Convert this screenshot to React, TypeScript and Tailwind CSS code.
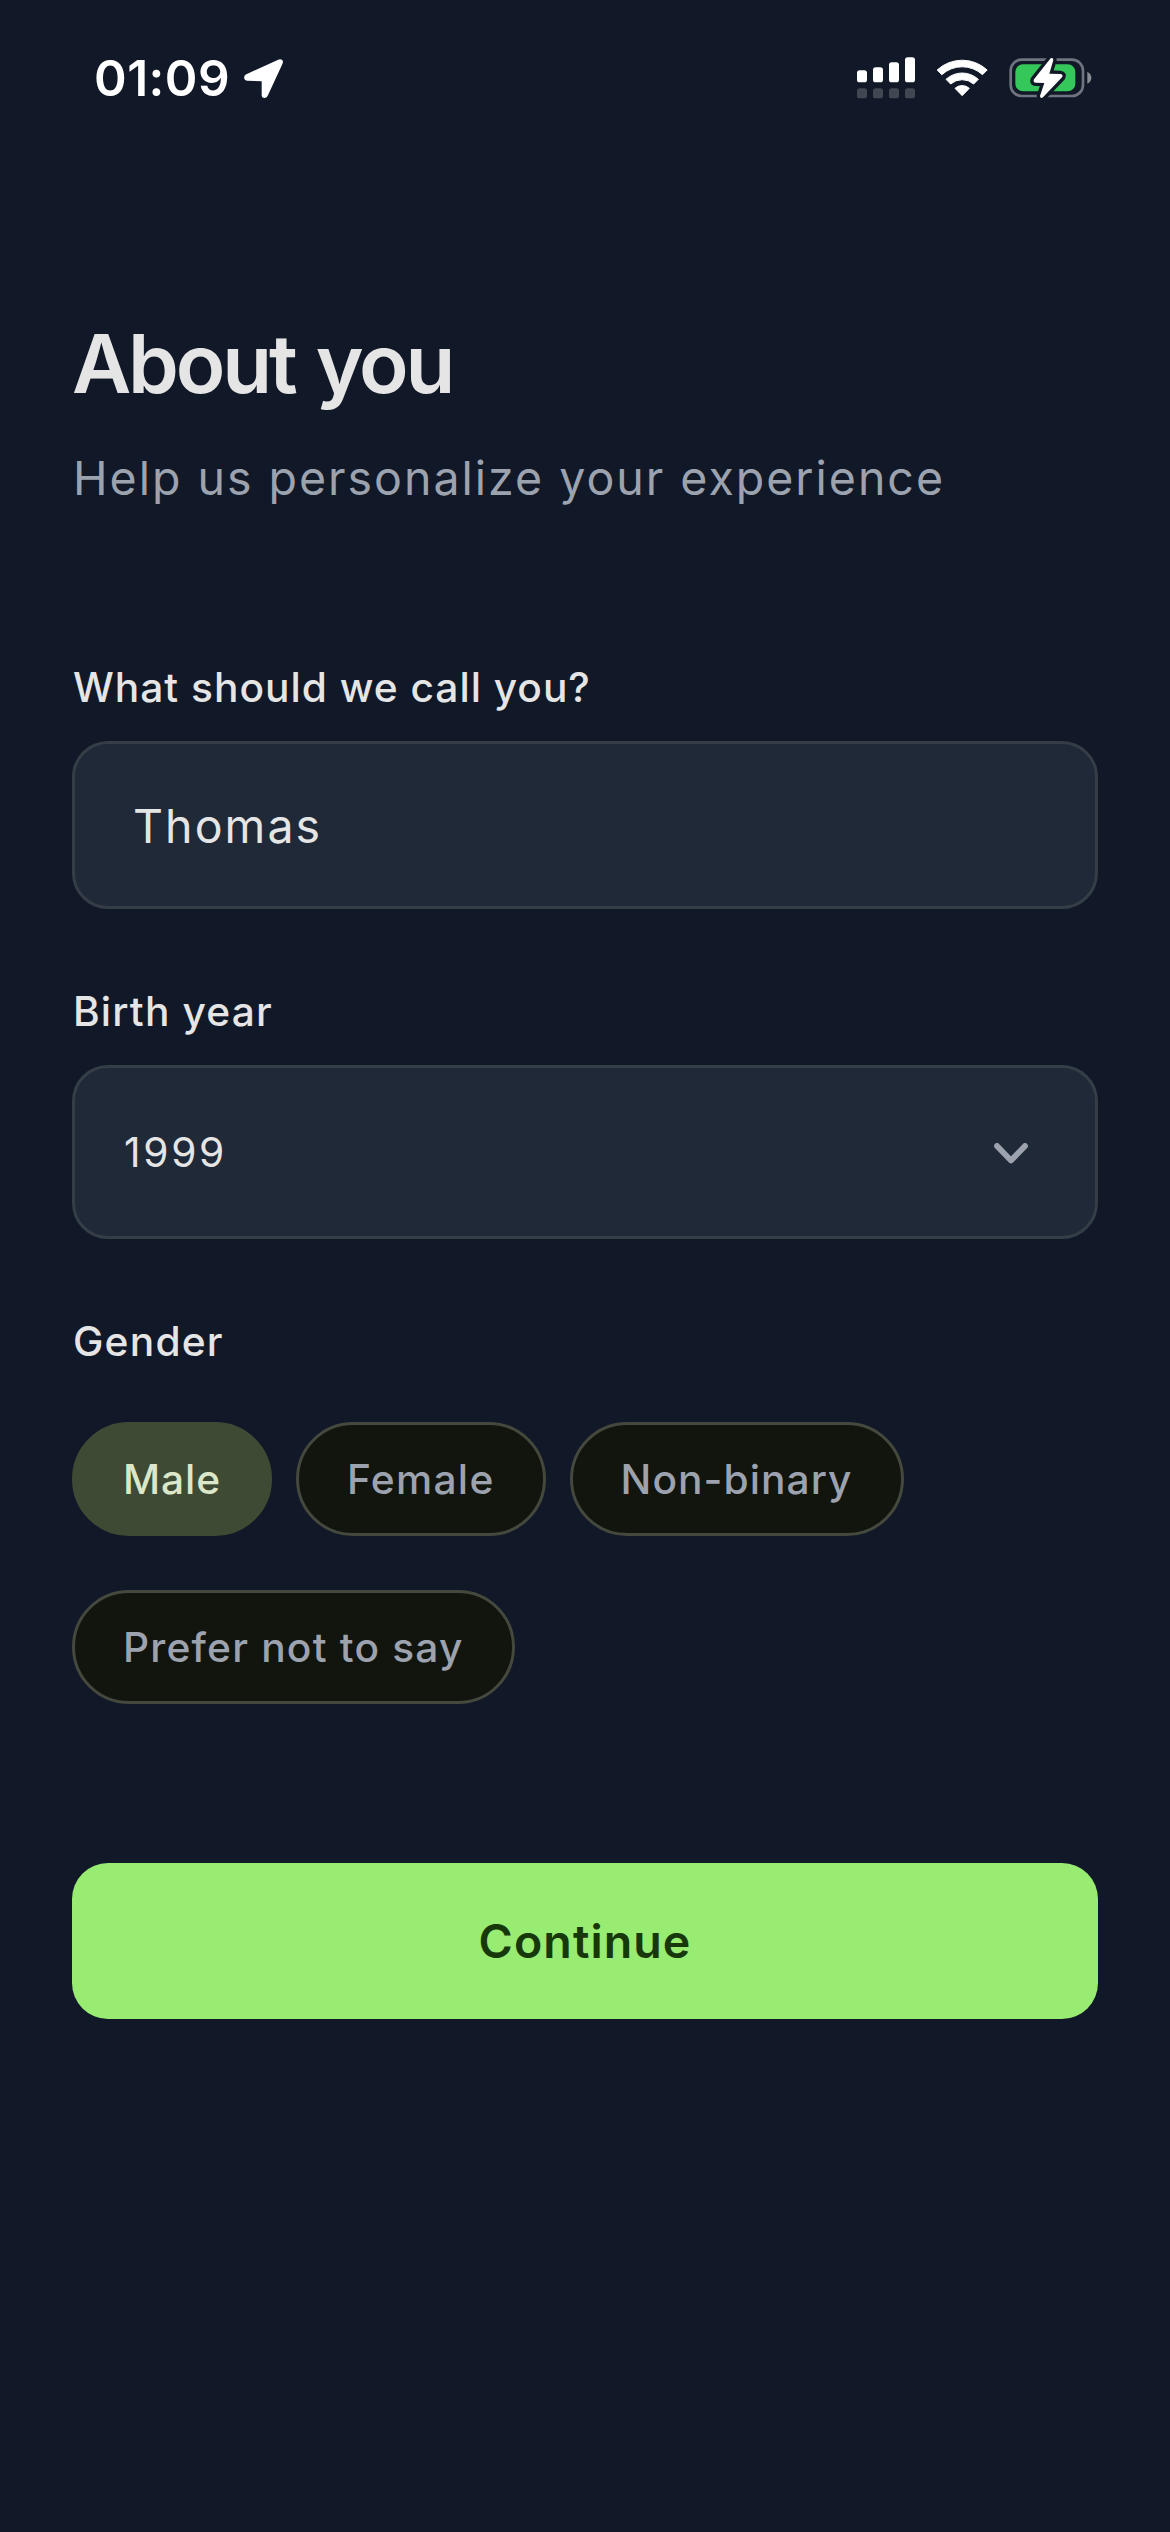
import { useState } from "react";
import clsx from "clsx";

type GenderOption = {
  name: string;
  tracking: string;
};

const genders: GenderOption[] = [
  { name: "Male", tracking: "tracking-[0.9px]" },
  { name: "Female", tracking: "tracking-[1.3px]" },
  { name: "Non-binary", tracking: "tracking-[1.05px]" },
  { name: "Prefer not to say", tracking: "tracking-[1.2px]" },
];

const LocationArrow = () => (
  <svg className="w-[39px] h-[39px]" viewBox="552 86 117 118" fill="white">
    <path d="M557 133 L655 88 Q662 85 667 89 Q671 93 668 100 L624 196 Q621 204 614 204 Q605 204 605 195 L605 153 L561 152 Q553 151 552 144 Q551 136 557 133 Z" />
  </svg>
);

const SignalIcon = () => (
  <svg className="w-[58px] h-[42px]" viewBox="78 80 174 126">
    <g fill="white">
      <rect x="78" y="120" width="30" height="36" rx="8" />
      <rect x="126" y="111" width="30" height="45" rx="8" />
      <rect x="174" y="96" width="30" height="60" rx="8" />
      <rect x="222" y="81" width="30" height="75" rx="8" />
    </g>
    <g fill="#414752">
      <rect x="78" y="174" width="30" height="30" rx="8" />
      <rect x="126" y="174" width="30" height="30" rx="8" />
      <rect x="174" y="174" width="30" height="30" rx="8" />
      <rect x="222" y="174" width="30" height="30" rx="8" />
    </g>
  </svg>
);

const WifiIcon = () => (
  <svg className="w-[52px] h-[42px]" viewBox="316 80 156 126">
    <g fill="white" stroke="white" strokeWidth="3" strokeLinejoin="round">
      <path d="M319.5 119 A110.5 110.5 0 0 1 469.5 119 L455.5 133 A90.5 90.5 0 0 0 333.5 133 Z" />
      <path d="M346 147 A71.5 71.5 0 0 1 443 147 L429 161 A52.5 52.5 0 0 0 360 161 Z" />
      <path d="M373 174 A31.5 31.5 0 0 1 416 174 L394.5 196 Z" />
    </g>
  </svg>
);

const BatteryIcon = () => (
  <svg className="w-[83px] h-[42px]" viewBox="536 80 249 126">
    <rect x="541" y="88" width="217" height="109" rx="33" fill="none" stroke="#6f7480" strokeWidth="8" />
    <rect x="555" y="102" width="180" height="81" rx="23" fill="#35c759" />
    <path d="M771 124 Q783 130 783 142 Q783 154 771 160 Z" fill="#8a8d93" />
    <path
      d="M661 84 L611 147 Q607 157 616 157 L642 158 L629 197 Q630 206 638 201 L695 141 Q700 132 690 131 L657 130 L669 89 Q668 80 661 84 Z"
      fill="white"
      stroke="#111827"
      strokeWidth="20"
      strokeLinejoin="round"
      paintOrder="stroke"
    />
  </svg>
);

const Label = ({ text, className }: { text: string; className: string }) => (
  <div className={clsx("pt-px pl-px text-[40.7px] leading-[60px] font-medium", className)}>{text}</div>
);

export default function App() {
  const [name, setName] = useState("Thomas");
  const [gender, setGender] = useState("Male");

  return (
    <div className="w-[1170px] h-[2532px] bg-[#111827] text-[#e5e5e5] font-['Inter',sans-serif] whitespace-nowrap overflow-hidden">
      {/* STATUS BAR */}
      <div className="flex justify-between pt-12 pl-[94px] pr-[78px] h-[313px]">
        <div className="flex items-start gap-[14px]">
          <span className="text-[49.5px] leading-[60px] font-semibold tracking-[0.5px] text-white">01:09</span>
          <div className="pt-[11px]">
            <LocationArrow />
          </div>
        </div>
        <div className="flex items-start pt-[9px]">
          <SignalIcon />
          <div className="pl-[21px] pr-[21px]">
            <WifiIcon />
          </div>
          <BatteryIcon />
        </div>
      </div>

      <div className="px-[72px]">
        <h1 className="pt-px text-[81.5px] leading-[100px] font-semibold tracking-[-3.2px] [word-spacing:4px]">
          About you
        </h1>
        <p className="mt-7 pl-px text-[46.5px] leading-[72px] tracking-[1.99px] text-[#9ca3af]">
          Help us personalize your experience
        </p>

        {/* NAME */}
        <div className="mt-[143px]">
          <Label text="What should we call you?" className="tracking-[0.99px]" />
          <input
            className="mt-[23px] block w-full h-[168px] rounded-[36px] border-[3px] border-[#353d47] bg-[#1f2937] pl-[58px] pt-[2px] text-[46.5px] tracking-[2.07px] outline-none"
            value={name}
            onChange={(e) => setName(e.target.value)}
          />
        </div>

        {/* BIRTH YEAR */}
        <div className="mt-[72px]">
          <Label text="Birth year" className="tracking-[1.15px]" />
          <button className="mt-[23px] flex w-full h-[174px] items-center justify-between rounded-[36px] border-[3px] border-[#353d47] bg-[#1f2937] pl-[49px] pr-[67px]">
            <span className="pt-[2px] text-[40.7px] leading-[60px] tracking-[2.7px]">1999</span>
            <svg className="mt-[2px] w-[34px] h-[21px]" viewBox="0 0 34 21" fill="none">
              <path
                d="M3 3 L17 17.5 L31 3"
                stroke="#9ca3af"
                strokeWidth="5.8"
                strokeLinecap="round"
                strokeLinejoin="round"
              />
            </svg>
          </button>
        </div>

        {/* GENDER */}
        <div className="mt-[72px]">
          <Label text="Gender" className="tracking-[1.2px]" />
          <div className="mt-[50px] flex flex-wrap gap-x-6 gap-y-[54px]">
            {genders.map((item) => (
              <button
                key={item.name}
                onClick={() => setGender(item.name)}
                className={clsx(
                  "h-[114px] rounded-full border-[3px] px-12 pt-[2px] text-[40.7px] leading-[60px] font-medium",
                  item.tracking,
                  gender === item.name
                    ? "border-[#3f4a35] bg-[#3f4a35] text-[#dbe7c8]"
                    : "border-[#44483d] bg-[#12140e] text-[#9ca3af]"
                )}
              >
                {item.name}
              </button>
            ))}
          </div>
        </div>

        <button className="mt-[159px] block w-full h-[156px] rounded-[36px] bg-[#98ec72] pt-px text-[46.5px] font-semibold tracking-[1.11px] text-[#17380b]">
          Continue
        </button>
      </div>
    </div>
  );
}
